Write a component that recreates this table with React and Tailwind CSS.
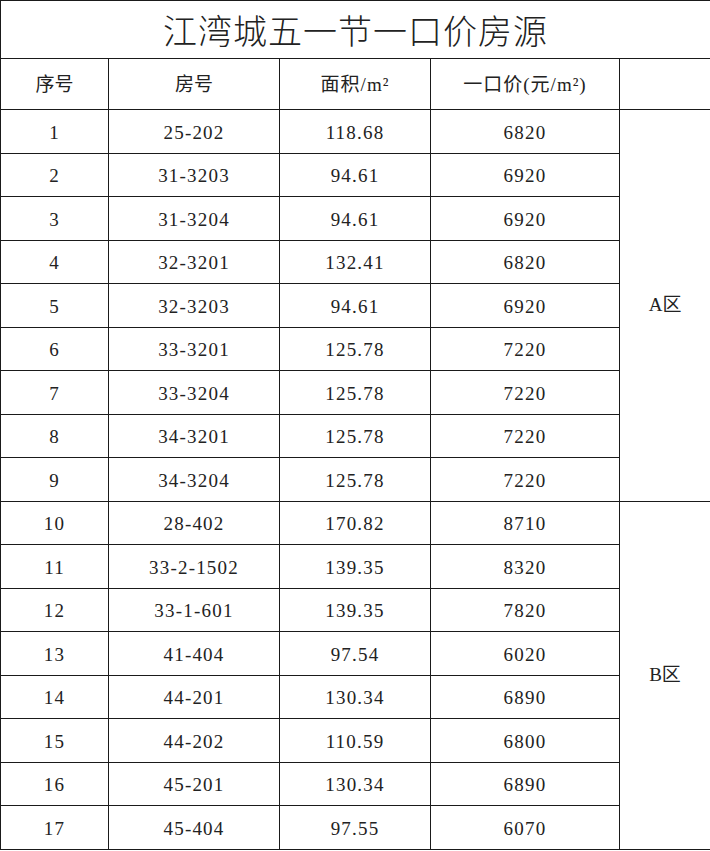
import React from 'react';

const rows = [
  ['1', '25-202', '118.68', '6820'],
  ['2', '31-3203', '94.61', '6920'],
  ['3', '31-3204', '94.61', '6920'],
  ['4', '32-3201', '132.41', '6820'],
  ['5', '32-3203', '94.61', '6920'],
  ['6', '33-3201', '125.78', '7220'],
  ['7', '33-3204', '125.78', '7220'],
  ['8', '34-3201', '125.78', '7220'],
  ['9', '34-3204', '125.78', '7220'],
  ['10', '28-402', '170.82', '8710'],
  ['11', '33-2-1502', '139.35', '8320'],
  ['12', '33-1-601', '139.35', '7820'],
  ['13', '41-404', '97.54', '6020'],
  ['14', '44-201', '130.34', '6890'],
  ['15', '44-202', '110.59', '6800'],
  ['16', '45-201', '130.34', '6890'],
  ['17', '45-404', '97.55', '6070'],
];

const cell = 'border-[1.5px] border-[#1a1a1a] text-center align-middle p-0';

const App = () => {
  return (
    <div className="w-[710px] h-[851px] bg-white text-[#222] font-['Liberation_Serif','Noto_Sans_CJK_SC',serif]">
      <table className="w-[710px] table-fixed border-collapse">
        <colgroup>
          <col className="w-[108px]" />
          <col className="w-[171px]" />
          <col className="w-[151px]" />
          <col className="w-[189px]" />
          <col className="w-[91px]" />
        </colgroup>
        <tbody>
          <tr className="h-[57px]">
            <td colSpan={5} className={`${cell} text-[34px] font-light tracking-[1px] pt-[6px]`}>
              江湾城五一节一口价房源
            </td>
          </tr>
          <tr className="h-[51px] text-[19px]">
            <td className={`${cell} pt-[3px]`}>序号</td>
            <td className={`${cell} pt-[3px]`}>房号</td>
            <td className={`${cell} pt-[3px] tracking-[1px]`}>面积/m²</td>
            <td className={`${cell} pt-[3px] tracking-[1px]`}>一口价(元/m²)</td>
            <td className={cell}></td>
          </tr>
          {rows.map((r, i) => (
            <tr key={i} className="h-[43.5px] text-[19px] tracking-[1.2px]">
              <td className={`${cell} pt-[3px]`}>{r[0]}</td>
              <td className={`${cell} pt-[3px]`}>{r[1]}</td>
              <td className={`${cell} pt-[3px]`}>{r[2]}</td>
              <td className={`${cell} pt-[3px]`}>{r[3]}</td>
              {i === 0 && (
                <td rowSpan={9} className={`${cell} tracking-normal`}>A区</td>
              )}
              {i === 9 && (
                <td rowSpan={8} className={`${cell} tracking-normal`}>B区</td>
              )}
            </tr>
          ))}
        </tbody>
      </table>
    </div>
  );
};

export default App;
